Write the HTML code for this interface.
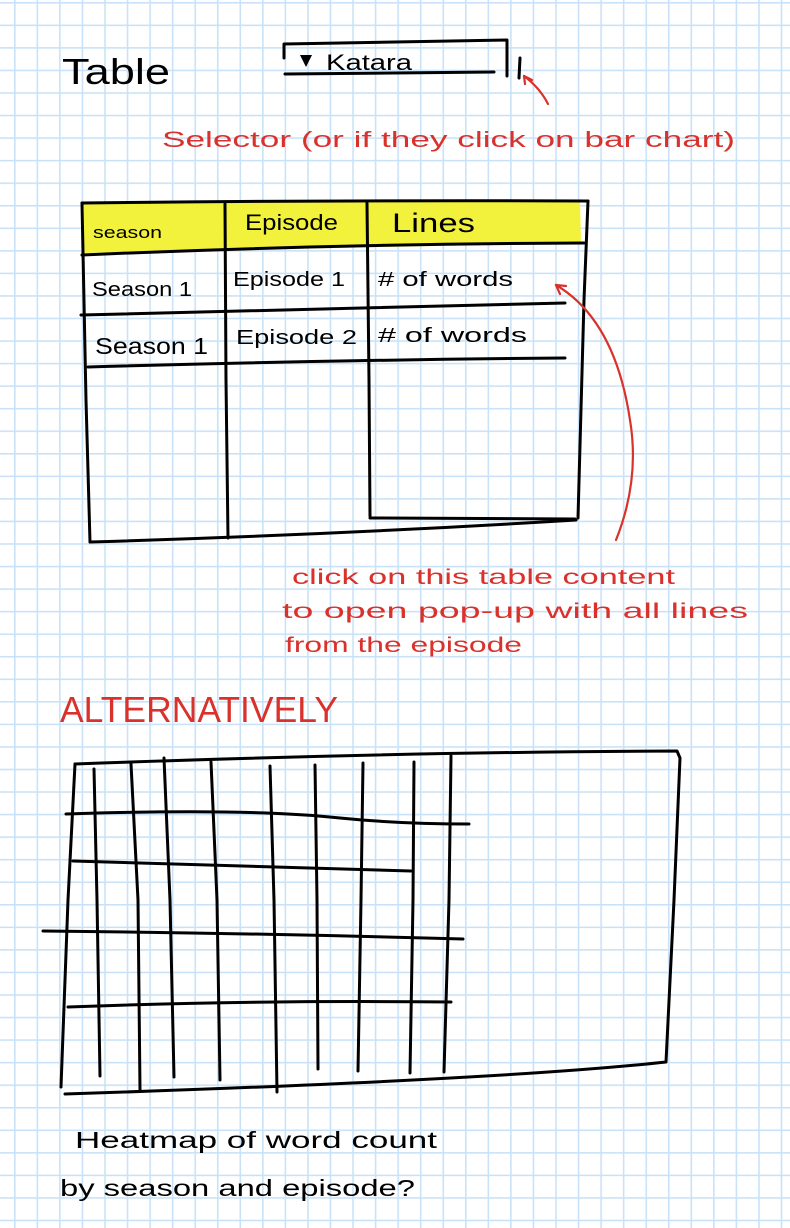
<!DOCTYPE html>
<html><head><meta charset="utf-8"><style>
html,body{margin:0;padding:0;background:#fff}
svg{display:block}
text{font-family:"Liberation Sans",sans-serif}
</style></head><body>
<svg width="790" height="1228" viewBox="0 0 790 1228" xmlns="http://www.w3.org/2000/svg">
<defs>
<pattern id="g" x="14" y="2" width="22.55" height="22.55" patternUnits="userSpaceOnUse">
<path d="M0 0V22.55M0 0H22.55" stroke="#c9e2f7" stroke-width="3.2" fill="none"/>
</pattern>
</defs>
<rect width="790" height="1228" fill="#fff"/>
<rect width="790" height="1228" fill="url(#g)"/>

<path d="M84 203 L580 201 L581 243 L84 253 Z" fill="#f2f23c"/>
<g fill="none" stroke="#000" stroke-width="3" stroke-linecap="round" stroke-linejoin="round">
<path d="M284 58 L284 44 L507 40 L507 76"/>
<path d="M285 74 L494 72"/>
<path d="M520 58 L519 78"/>
<path d="M82 203 Q330 200 588 201"/>
<path d="M588 201 L584 300 L578 518"/>
<path d="M82 203 L86 400 L90 542"/>
<path d="M90 542 Q330 535 576 520"/>
<path d="M225 204 L226 380 L228 538"/>
<path d="M367 203 L369 380 L370 516"/>
<path d="M82 255 Q330 244 584 243"/>
<path d="M81 315 Q330 308 565 303"/>
<path d="M88 367 Q330 360 565 358"/>
<path d="M370 518 L575 519"/>
<path d="M75 764 Q400 752 677 751 L680 758 L674 900 L666 1062 Q500 1080 65 1094"/>
<path d="M75 764 L68 900 L61 1087"/>
<path d="M94 769 L97 900 L100 1076"/>
<path d="M131 764 L138 900 L140 1090"/>
<path d="M164 758 L170 900 L174 1077"/>
<path d="M211 762 L217 900 L220 1080"/>
<path d="M270 766 L274 900 L277 1092"/>
<path d="M315 765 L317 900 L318 1069"/>
<path d="M363 763 L361 900 L358 1071"/>
<path d="M414 762 L413 900 L410 1073"/>
<path d="M451 756 L449 900 L444 1072"/>
<path d="M66 814 Q250 808 340 818 Q400 824 469 824"/>
<path d="M73 861 Q250 866 411 871"/>
<path d="M43 931 Q250 933 463 939"/>
<path d="M68 1007 Q250 1000 451 1002"/>
</g>
<path d="M300 55 L312 55 L306 67 Z" fill="#000"/>

<g fill="#000">
<text x="62" y="84" font-size="36" textLength="108" lengthAdjust="spacingAndGlyphs">Table</text>
<text x="326" y="70" font-size="22" textLength="86" lengthAdjust="spacingAndGlyphs">Katara</text>
<text x="93" y="238" font-size="17" textLength="69" lengthAdjust="spacingAndGlyphs">season</text>
<text x="245" y="230" font-size="22" textLength="93" lengthAdjust="spacingAndGlyphs">Episode</text>
<text x="392" y="232" font-size="27" textLength="83" lengthAdjust="spacingAndGlyphs">Lines</text>
<text x="92" y="296" font-size="20" textLength="100" lengthAdjust="spacingAndGlyphs">Season 1</text>
<text x="233" y="286" font-size="20" textLength="112" lengthAdjust="spacingAndGlyphs">Episode 1</text>
<text x="378" y="286" font-size="20" textLength="135" lengthAdjust="spacingAndGlyphs"># of words</text>
<text x="95" y="354" font-size="23" textLength="113" lengthAdjust="spacingAndGlyphs">Season 1</text>
<text x="236" y="344" font-size="20" textLength="121" lengthAdjust="spacingAndGlyphs">Episode 2</text>
<text x="378" y="342" font-size="20" textLength="149" lengthAdjust="spacingAndGlyphs"># of words</text>
<text x="75" y="1148" font-size="23" textLength="362" lengthAdjust="spacingAndGlyphs">Heatmap of word count</text>
<text x="60" y="1196" font-size="23" textLength="355" lengthAdjust="spacingAndGlyphs">by season and episode?</text>
</g>

<g fill="#d9322c">
<text x="162" y="147" font-size="22" textLength="573" lengthAdjust="spacingAndGlyphs">Selector (or if they click on bar chart)</text>
<text x="292" y="584" font-size="21" textLength="383" lengthAdjust="spacingAndGlyphs">click on this table content</text>
<text x="282" y="618" font-size="21" textLength="466" lengthAdjust="spacingAndGlyphs">to open pop-up with all lines</text>
<text x="285" y="652" font-size="21" textLength="237" lengthAdjust="spacingAndGlyphs">from the episode</text>
<text x="60" y="722" font-size="36" textLength="278" lengthAdjust="spacingAndGlyphs">ALTERNATIVELY</text>
</g>
<g fill="none" stroke="#d9322c" stroke-width="2.2" stroke-linecap="round">
<path d="M548 104 Q540 88 524 76"/><path d="M524 76 L532 80"/><path d="M524 76 L525 84"/>
<path d="M616 540 Q640 480 630 420 Q615 320 556 285"/><path d="M556 285 L566 286"/><path d="M556 285 L560 294"/>
</g>
</svg>
</body></html>
